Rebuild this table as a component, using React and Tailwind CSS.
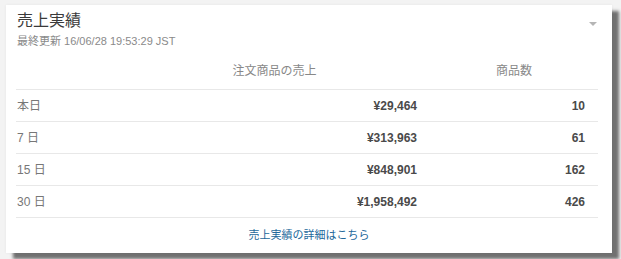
const rows = [
  { label: "本日", amount: "¥29,464", count: "10" },
  { label: "7 日", amount: "¥313,963", count: "61" },
  { label: "15 日", amount: "¥848,901", count: "162" },
  { label: "30 日", amount: "¥1,958,492", count: "426" },
];

export default function App() {
  return (
    <div
      className="w-[621px] h-[259px] overflow-hidden bg-[#f3f3f3] pl-[6px] pt-[5px]"
      style={{ fontFamily: '"Liberation Sans", "Noto Sans CJK JP", sans-serif' }}
    >
      <div className="w-[606px] h-[248px] bg-white pl-[10px] pr-[14px] pt-[6px] flex flex-col shadow-[0_0_3px_rgba(0,0,0,0.06),7px_6px_3px_rgba(80,80,80,0.8)]">
        {/* header */}
        <div className="flex items-start justify-between">
          <div className="h-[20px] leading-[20px] text-[16px] text-[#3a3a3a] pl-px">売上実績</div>
          <svg width="8" height="5" viewBox="0 0 8 5" className="mt-[11px] mr-[1px]">
            <path d="M0 0 L8 0 L4 4 Z" fill="#b5b5b5" />
          </svg>
        </div>
        <div className="h-[14px] leading-[14px] mt-[3px] text-[11px] text-[#8a8a8a] pl-px">
          最終更新 16/06/28 19:53:29 JST
        </div>

        {/* table */}
        <div className="flex items-end h-[42px] pb-[10px] border-b border-[#e8e8e8] text-[12px] leading-[16px] text-[#888]">
          <div className="w-[114px]" />
          <div className="w-[289px] text-center">注文商品の売上</div>
          <div className="flex-1 pl-[24px] pr-[13px] text-center">商品数</div>
        </div>
        {rows.map((r) => (
          <div
            key={r.label}
            className="flex items-center h-[32px] border-b border-[#e8e8e8] text-[12px]"
          >
            <div className="w-[114px] pl-px text-[#777]">{r.label}</div>
            <div className="w-[289px] text-right pr-[2px] font-bold text-[#4a4a4a]">{r.amount}</div>
            <div className="flex-1 pl-[24px] pr-[13px] text-right font-bold text-[#4a4a4a]">{r.count}</div>
          </div>
        ))}

        {/* footer link */}
        <div className="flex-1 flex items-center justify-center">
          <a href="#" className="text-[11px] text-[#23689b] ml-[4px]">
            売上実績の詳細はこちら
          </a>
        </div>
      </div>
    </div>
  );
}
